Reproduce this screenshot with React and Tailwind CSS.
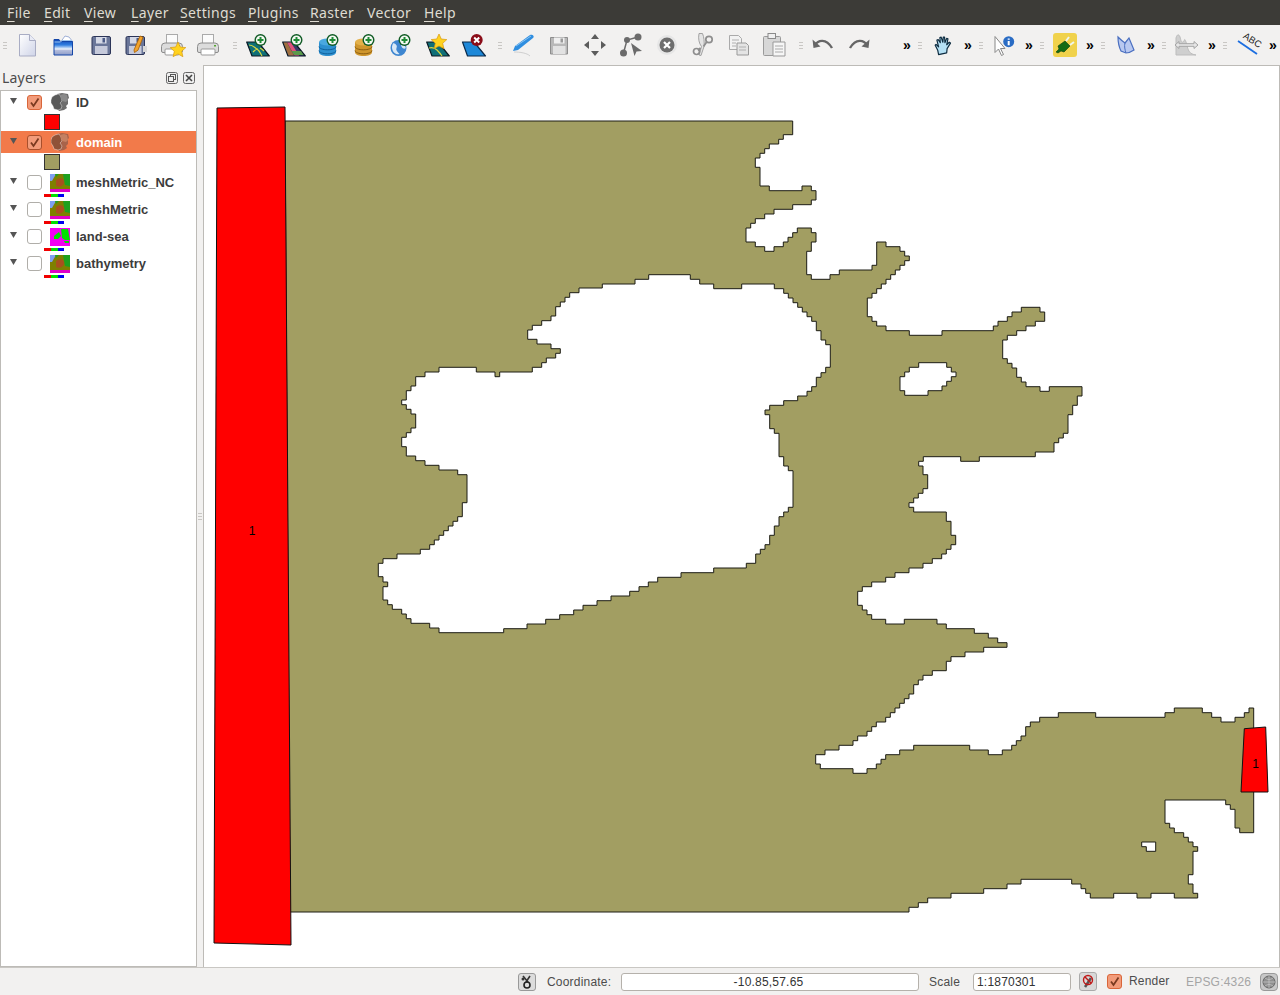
import React from "react";

const stair = (ox, oy, a) => {
  let s = "";
  for (let i = 0; i < a.length; i += 2) s += `H${(ox + a[i] / 3).toFixed(1)}V${(oy + a[i + 1] / 3).toFixed(1)}`;
  return s;
};
const partA = [158,74,130,88,116,102,88,116,74,130,60,144,46,172,60,228,88,242,186,228,214,242,228,270,214,284,158,298,102,312,74,326,46,340,32,354,18,396,46,410,74,424,102,410,130,396,144,382,158,368,172,354,214,368,228,396,214,424,200,494,214,508,270,494,298,480,396,466,410,396,438,410,480,424,494,438,508,452,494,466,480,480,466,494,452,508,438,522,424,536,410,550,396,564,382,620,396,634,410,648,438,662,508,676,606,662,760,648,774,634,802,620,816,606,844,592,900,606,914,634,886,648,858,662,830,676,802,690,788,746,802,760,816,774,830,802,844,816,858,830,900,844,928,830,1026,858,1012,886,998,914,984,970,970,984,956,998,942,1026,886,1040,718,1054,662,1040,550,1054,536,1068];
const partB = [369,74,383,116,369,130,355,144,341,158,327,172,341,186,439,214,453,256,467,284,453,298,439,312,425,326,397,340,369,354,327,368,285,382,257,396,215,410,187,424,173,466,187,480,201,494,215,508,257,522,313,508,411,522,439,536,523,550,565,564,593,578,621,592,551,606,495,620,453,634,439,662,397,676,369,690,355,704,341,732,327,746,313,760,299,774,285,788,271,802,257,816,229,830,215,844,201,858,173,872,159,886,117,900,75,914,47,942,61,956,159,970,201,956,229,942,243,928,257,914,299,900,341,886,509,900,565,914,607,900,635,886,649,872,663,858,677,830,691,816,719,802,775,788,887,802,1095,788,1123,774,1207,788,1235,802,1263,816,1305,802,1333,788,1347,774,1361,1148,1319,1134,1305,1078,1291,1064,1277,1050,1095,1120,1109,1134,1123,1148,1151,1162,1165,1176,1179,1190,1193,1204,1179,1274,1165,1302,1179,1330,1193,1344,1123,1330,1053,1344,1011,1330,941,1344,871,1330,857,1316,843,1302,815,1288,663,1302,621,1316,551,1330,453,1344,383,1358,355,1372,327,1386];
const hole = [961,28,989,42,1031,56,1115,42,1213,56,1241,70,1255,84,1269,98,1283,112,1297,126,1311,140,1325,154,1339,182,1353,210,1367,224,1381,292,1367,308,1353,322,1339,350,1325,364,1311,378,1283,392,1241,406,1199,420,1185,434,1199,476,1213,490,1227,560,1241,588,1255,602,1269,712,1255,726,1241,740,1227,768,1213,796,1199,824,1185,838,1171,852,1157,880,1129,894,1031,908,933,922,863,936,835,950,807,964,779,978,723,992,681,1006,639,1020,611,1034,569,1048,527,1062,471,1076,401,1088,207,1074,179,1060,123,1046,109,1032,95,1018,67,1004,53,990,39,950,53,936,39,920,25,880,39,866,81,852,151,838,179,824,193,810,207,796,221,782,235,768,249,754,263,740,277,698,291,614,263,600,207,586,165,572,137,558,109,530,95,502,109,488,123,474,137,432,123,418,109,404,95,390,109,362,123,348,137,320,165,306,207,292,319,306,375,320,389,306,487,292,515,278,529,264,557,250,571,236,543,222,501,208,473,180,487,166,515,152,543,138,557,110,571,96,585,82,599,68,627,54,697,42,795,28,836,14];
const island = [620,772,634,786,648,800,634,814,620,828,606,842,564,856,494,842,480,800,494,786,508,772,536,758];
const small = [1067,1204,1039,1190,1025,1176];
const domainPath =
  "M285 121" + stair(740, 110, partA) + stair(800, 450, partB) + "H290Z" +
  `M${(370 + 836 / 3).toFixed(1)} ${(270 + 14 / 3).toFixed(1)}` + stair(370, 270, hole) + "Z" +
  `M${(740 + 536 / 3).toFixed(1)} ${(110 + 758 / 3).toFixed(1)}` + stair(740, 110, island) + "Z" +
  `M${(800 + 1025 / 3).toFixed(1)} ${(450 + 1176 / 3).toFixed(1)}` + stair(800, 450, small) + "Z";

const Svg = ({ children }) => (
  <svg width="24" height="24" viewBox="0 0 24 24" className="block shrink-0 overflow-visible">{children}</svg>
);
const Plus = () => (
  <g>
    <circle cx="14.500" cy="7" r="6" fill="#0f5a24" />
    <circle cx="14.500" cy="7" r="4.600" fill="#f4f8f2" />
    <path d="M14.500 4v6M11.500 7h6" stroke="#1e8a35" strokeWidth="2" />
  </g>
);
const PLANE = "M.7 9H12l11.300 14H6z";
const Db = ({ c1, c2, c3 }) => (
  <g>
    <path d="M1 9v10.500C1 21.400 4.800 23 9.500 23s8.500-1.600 8.500-3.500V9z" fill={c1} />
    <ellipse cx="9.500" cy="9" rx="8.500" ry="3.500" fill={c2} />
    <path d="M1 13.500c0 1.900 3.800 3.300 8.500 3.300S18 15.400 18 13.500M1 17.500c0 1.900 3.800 3.300 8.500 3.300S18 19.400 18 17.500" fill="none" stroke={c3} strokeWidth="1" />
  </g>
);
const Floppy = ({ a = "#6a7699" }) => (
  <g>
    <path d="M3 5a1.500 1.500 0 0 1 1.500-1.500H20A1.500 1.500 0 0 1 21.500 5V20A1.500 1.500 0 0 1 20 21.500H4.500A1.500 1.500 0 0 1 3 20z" fill={a} stroke="#2c3558" strokeWidth="1" />
    <rect x="7" y="4" width="10.500" height="6.500" fill="#d5d9e6" />
    <rect x="13.500" y="5" width="2.500" height="4.500" fill="#4a5a86" />
    <rect x="6" y="13" width="12.500" height="8" fill="#c6cadb" />
  </g>
);
const Printer = () => (
  <g transform="translate(1 0)">
    <rect x="6.500" y="1.500" width="11" height="9" fill="#fbfbfb" stroke="#aaa" />
    <path d="M1.500 13.500a3.500 3.500 0 0 1 3.500-3.500h14a3.500 3.500 0 0 1 3.500 3.500V18a1.500 1.500 0 0 1-1.500 1.500H3A1.500 1.500 0 0 1 1.500 18z" fill="#dcdcdc" stroke="#8c8c8c" />
    <rect x="5" y="16" width="14" height="6" rx="1" fill="#fff" stroke="#999" />
    <rect x="18" y="12" width="2" height="1.500" fill="#55a630" />
  </g>
);
const Star = ({ x = 0, y = 0 }) => (
  <path transform={`translate(${x} ${y})`} d="M8 0l2.300 5 5.500.6-4.100 3.700 1.200 5.400L8 12l-4.900 2.700 1.200-5.400L.2 5.600 5.700 5z" fill="#ffd21f" stroke="#d99a10" strokeWidth=".7" />
);

const icons = {
  new: <Svg><defs><linearGradient id="pg" x1="0" y1="0" x2="1" y2="1"><stop offset="0" stopColor="#fff" /><stop offset="1" stopColor="#cfd4e8" /></linearGradient></defs><path d="M4.500 1.500h10l6 6v15.500h-16z" fill="url(#pg)" stroke="#a9adc4" /><path d="M14.500 1.500v6h6" fill="#e9ebf5" stroke="#a9adc4" /></Svg>,
  open: <Svg><defs><linearGradient id="fo" x1="0" y1="0" x2="0" y2="1"><stop offset="0" stopColor="#0f46b4" /><stop offset=".35" stopColor="#2f7ee0" /><stop offset=".62" stopColor="#f2f7fd" /><stop offset=".68" stopColor="#b6bfdd" /><stop offset="1" stopColor="#8e9cc8" /></linearGradient></defs><path d="M5 9l5-.5 4-5.500 4 1 4 5" fill="#fff" stroke="#9fb0d6" strokeWidth="1" /><path d="M3 6.500h5l1.500 2H21.500V22H3z" fill="url(#fo)" stroke="#1446a8" strokeWidth="1" /><path d="M3.500 9h6l1.500-1.500h10" stroke="#9cc6f1" fill="none" /></Svg>,
  save: <Svg><g transform="translate(2 0)"><Floppy /></g></Svg>,
  saveas: <Svg><Floppy /><rect x="20" y="13" width="4" height="6" fill="#d8d8d8" /><path d="M11 17L17 3l3 1.200-5 13-3.500 2.300z" fill="#f2a32c" stroke="#a85f00" strokeWidth=".8" /></Svg>,
  composer: <Svg><Printer /><Star x={11} y={9} /></Svg>,
  print: <Svg><Printer /></Svg>,
  addvec: <Svg><path d={PLANE} fill="#0f6f77" stroke="#0a1a24" strokeWidth="1.200" strokeLinejoin="round" /><path d="M3 12c4 0 5 2 8 4s3 4 5 7M7 19c2-2 3-3 5-3M14 15c2 1 3 2 4 3" fill="none" stroke="#d9d640" strokeWidth="1.200" /><Plus /></Svg>,
  addras: <Svg><path d={PLANE} fill="#3a3a6a" stroke="#0a1a24" strokeWidth="1.200" strokeLinejoin="round" /><path d="M5 9.500h4l8 13h-4.500z" fill="#e0507a" /><path d="M1.500 9.500H5l7 13H6.500z" fill="#a07040" /><path d="M9.500 18h9.500l2.500 4h-9z" fill="#5a9a4a" /><Plus /></Svg>,
  pg: <Svg><Db c1="#2d8fcf" c2="#4aa8e0" c3="#0f5f9a" /><Plus /></Svg>,
  sl: <Svg><Db c1="#cf962d" c2="#e3b04a" c3="#8a5c10" /><Plus /></Svg>,
  wms: <Svg><circle cx="8.500" cy="15" r="8" fill="#3e86d0" /><path d="M3.500 10c3 1 4 3 3 5s1 4 3 6c-3 1-6-1-7-4s-.5-5 1-7zM11.500 11c2 0 3 1 4 3s-2 2-3 1-2-3-1-4z" fill="#d8e8f6" /><Plus /></Svg>,
  newvec: <Svg><path d={PLANE} fill="#0f6f77" stroke="#0a1a24" strokeWidth="1.200" strokeLinejoin="round" /><path d="M3 15c4-1 6 0 8 2s3 3 5 6" fill="none" stroke="#d9d640" strokeWidth="1.200" /><Star x={5} y={1} /></Svg>,
  remove: <Svg><path d="M.5 9H12l11.500 14H5.500z" fill="#1e88d8" stroke="#0a2a4a" strokeWidth="1.200" strokeLinejoin="round" /><circle cx="14.700" cy="7" r="6" fill="#8a0c18" /><path d="M12.200 4.500l5 5M17.200 4.500l-5 5" stroke="#fff" strokeWidth="2" /></Svg>,
  pencil: <Svg><path d="M4 13L19 2c2-1 5 1 3 3L7 17l-5 1z" fill="#2f8ee0" /><path d="M5 13L20 3" stroke="#8cc5f2" /><path d="M3 19c6 0 13 1 16 4" stroke="#cfcfcf" fill="none" /></Svg>,
  savegray: <Svg><path d="M3.500 4.500h17v16.500h-17z" fill="#b8b8b8" stroke="#8d8d8d" /><rect x="7" y="4.500" width="10.500" height="6" fill="#efefef" /><rect x="13.500" y="5.500" width="2.500" height="4" fill="#999" /><rect x="6" y="13" width="12.500" height="8" fill="#e2e2e2" /></Svg>,
  move: <Svg><path d="M12 1l4 5H8zM12 23l-4-5h8zM1 12l5-4v8zM23 12l-5 4V8z" fill="#5c5c5c" /></Svg>,
  node: <Svg><circle cx="19" cy="4" r="3.500" fill="#6b6b6b" /><circle cx="8" cy="7" r="3" fill="#6b6b6b" /><circle cx="4.500" cy="20" r="3.500" fill="#6b6b6b" /><path d="M19 4L8 7 4.500 20" stroke="#6b6b6b" strokeWidth="1.500" fill="none" /><path d="M12 10l11 8-5.500.5-2 4.500z" fill="#6a6a6a" /></Svg>,
  del: <Svg><circle cx="12" cy="12" r="10" fill="#e6e6e6" /><circle cx="12" cy="12" r="7.500" fill="#6e6e6e" /><path d="M9 9l6 6M15 9l-6 6" stroke="#fff" strokeWidth="2.200" /></Svg>,
  cut: <Svg><path d="M8 .5c-1 5 0 10 2.500 13L8 22l2 .5 3-9C13.500 9 13 4 11.500.5z" fill="#e4e4e4" stroke="#9a9a9a" strokeWidth=".9" /><path d="M12.500 13.500l3.500-5M9.500 15l-2.500 2.500" stroke="#8e8e8e" strokeWidth="1.800" /><circle cx="18" cy="6.500" r="3.200" fill="none" stroke="#8e8e8e" strokeWidth="1.700" /><circle cx="5.500" cy="18.500" r="3" fill="none" stroke="#8e8e8e" strokeWidth="1.700" /></Svg>,
  copy: <Svg><path d="M2.500 2.500h9l3 3v11h-12z" fill="#f2f2f2" stroke="#aaa" /><path d="M10 10h9l2.500 2.500V22H10z" fill="#e4e4e4" stroke="#999" /><path d="M5 7h7M5 10h4M5 13h4M12 14h7M12 17h7" stroke="#b0b0b0" /></Svg>,
  paste: <Svg><rect x=".5" y="3.500" width="17" height="19" rx="1" fill="#d7d7d7" stroke="#9a9a9a" /><rect x="5" y=".5" width="7.500" height="5" fill="#efefef" stroke="#8a8a8a" /><path d="M10 9h12v14H10z" fill="#f6f6f6" stroke="#999" /><path d="M12 13h8M12 16h8M12 19h8" stroke="#aaa" /></Svg>,
  undo: <Svg><path d="M4 12c3-5 11-7 17 3" fill="none" stroke="#666" strokeWidth="2.400" /><path d="M1.500 6.500l1 8.500 7-1.500z" fill="#666" /></Svg>,
  redo: <Svg><path d="M20 12c-3-5-11-7-17 3" fill="none" stroke="#666" strokeWidth="2.400" /><path d="M22.500 6.500l-1 8.500-7-1.500z" fill="#666" /></Svg>,
  hand: <Svg><g transform="translate(2.500 2) scale(.85)"><path d="M6 23l-1-5-3-6 1-1 3 3-2-8 1.500-.5L8 9 7.500 3 9 2.500 11 8.500 11.500 2.500 13 2.500l.5 6.500 2-5 1.500.5-1.500 7 3-3 1.500 1-4 6.500-.5 5z" fill="#b5e1f5" stroke="#0d2c40" strokeWidth="1.400" strokeLinejoin="round" /></g></Svg>,
  identify: <Svg><path d="M3 3.500v16l3.500-3.500 3 6.500 2-1-3-6h4.500z" fill="#fff" stroke="#888" /><circle cx="16.700" cy="8.700" r="5.500" fill="#2a6cc4" /><path d="M16.700 5.500v1.200M16.700 8v4.200" stroke="#fff" strokeWidth="2" /></Svg>,
  plug: <Svg><rect width="24" height="24" rx="3" fill="#f0d24c" /><g transform="translate(0 -2)"><path d="M3 21l3-3-1-3 7-5 5 5-6 6-3-1-3 2z" fill="#146c14" stroke="#0c3f0c" strokeWidth=".6" /><path d="M13 10l3-4M17 14l4-3" stroke="#eef6ee" strokeWidth="2" /></g></Svg>,
  grass: <Svg><g transform="translate(-1 0)"><path d="M5 4c2 2 4 4 7 6 2-2 3-4 4-5l5 12c-3 2-6 3-8 3l-5-2c-2-4-3-9-3-14z" fill="#b8c8f0" stroke="#4a6fc0" strokeWidth="1.200" /><path d="M12 10c-1 3 0 7 1 10" stroke="#4a6fc0" fill="none" /></g></Svg>,
  hist: <Svg><path d="M1 22V5c1-4 3-4 4-1s1 6 3 5 1-5 3 0 1 12 10 13z" fill="#cfcfcf" stroke="#bdbdbd" /><path d="M0 12l4-3.500v2.200h15V8.500l4 3.500-4 3.500v-2.200H4v2.200z" fill="#e6e6e6" stroke="#a4a4a4" /></Svg>,
  abc: <Svg><path d="M2 8l19 13" stroke="#1c6ee0" strokeWidth="1.800" /><text transform="translate(6.500 4.500) rotate(33)" fontFamily="'Liberation Sans',sans-serif" fontSize="9.500" fill="#222">ABC</text></Svg>,
};

const Grip = ({ className = "" }) => (
  <div className={`w-[4px] flex flex-col gap-[2px] shrink-0 ${className}`}>
    <div className="h-px bg-[#c9c7c4]" />
    <div className="h-px bg-[#c9c7c4]" />
    <div className="h-px bg-[#c9c7c4]" />
  </div>
);
const Btn = ({ n, className = "" }) => (
  <div className={`w-[36px] h-[36px] flex items-center justify-center shrink-0 ${className}`}>{icons[n]}</div>
);
const More = ({ className = "" }) => (
  <div className={`w-[14px] text-center text-[14px] font-bold leading-none text-black shrink-0 font-['Liberation_Sans',sans-serif] ${className}`}>»</div>
);
const Unit = ({ n }) => (
  <>
    <Grip className="ml-[4px]" />
    <Btn n={n} className="ml-[3px]" />
    <More />
  </>
);

const menus = [
  ["F", "ile", "w-[37px]"],
  ["E", "dit", "w-[40px]"],
  ["V", "iew", "w-[47px]"],
  ["L", "ayer", "w-[49px]"],
  ["S", "ettings", "w-[68px]"],
  ["P", "lugins", "w-[62px]"],
  ["R", "aster", "w-[57px]"],
  ["Vect", "or", "w-[57px]", true],
  ["H", "elp", "w-[50px]"],
];

const Check = ({ on, selected }) => (
  <div className={`w-[15px] h-[15px] rounded-[3px] border flex items-center justify-center shrink-0 ${on ? "bg-[#f29b7a]" : "border-[#b0aea9] bg-white"} ${on && selected ? "border-[#a84f2c]" : ""} ${on && !selected ? "border-[#d9663a]" : ""}`}>
    {on && (
      <svg width="13" height="13" viewBox="0 0 13 13"><path d="M3 6.500l2.500 3.500L10.500 2.500" fill="none" stroke="#7a3a20" strokeWidth="1.800" /></svg>
    )}
  </div>
);
const Tri = () => (
  <svg width="7" height="6" viewBox="0 0 7 6" className="shrink-0 block mb-[2px]"><path d="M0 0h7L3.500 6z" fill="#555" /></svg>
);
const Rock = ({ a, b, c }) => (
  <svg width="18" height="18" viewBox="0 0 18 18" className="shrink-0">
    <path d="M6 1l5-1 6 1 1 4-1 1v5l-2 2 1 2-3 2-5 1-3-4z" fill={c} />
    <path d="M0 7l1-3 3-2 4-1 2 3 1 4-2 2 2 3-1 3-3 1-4-1-1-3-2-3z" fill={a} stroke="#fff" strokeWidth=".4" />
    <path d="M9 2l4-1 3 1 1 5-2 2-4-1-1-3z" fill={b} />
  </svg>
);
const Raster = ({ land }) => (
  <svg width="20" height="18" viewBox="0 0 20 18" className="shrink-0 mt-[2px]">
    {land ? (
      <g>
        <rect width="20" height="18" fill="#f200f2" />
        <path d="M11 1h7l1 6 1 5h-5l-3-2zM4 8l5-4 2 4-3 3-4 0zM14 13h5v2h-4z" fill="#00e000" />
      </g>
    ) : (
      <g>
        <rect width="20" height="18" fill="#7f7f00" />
        <rect width="20" height="3" y="15" fill="#e000c8" />
        <path d="M0 0h6L2 7H0z" fill="#7f9ff0" />
        <path d="M13 0h7v12l-5-1zM5 0h4L6 3z" fill="#1ea01e" />
        <path d="M6 6c4-3 8-2 8 2s-5 6-8 4z" fill="#a8501e" />
      </g>
    )}
  </svg>
);
const Ramp = () => (
  <div className="flex w-[20px] h-[3px] ml-[43px] mt-px">
    <div className="w-[7px] bg-[#f00000]" />
    <div className="w-[7px] bg-[#00e000]" />
    <div className="w-[6px] bg-[#0000f0]" />
  </div>
);
const RasterRow = ({ name, land }) => (
  <div className="h-[27px] flex flex-col">
    <div className="flex items-center h-[22px]">
      <div className="w-[26px] pl-[9px]"><Tri /></div>
      <Check />
      <div className="ml-[8px]"><Raster land={land} /></div>
      <span className="ml-[6px] mt-[2px] text-[13px] font-bold text-[#3c3c3c] font-['Liberation_Sans',sans-serif]">{name}</span>
    </div>
    <Ramp />
  </div>
);
const Swatch = ({ c, h }) => (
  <div className={`${h} flex items-center pl-[43px]`}>
    <div className="w-[16px] h-[16px] border border-[#333]" style={{ background: c }} />
  </div>
);

export default function App() {
  return (
    <div className="w-[1280px] h-[995px] flex flex-col bg-[#f2f1f0] overflow-hidden font-['Noto_Sans',sans-serif]">
      <div className="h-[25px] bg-[#3c3b37] flex items-center pl-[7px] text-[14px] tracking-[0.35px] text-[#dfdbd2] shrink-0">
        {menus.map(([a, b, w, after]) => (
          <div key={a + b} className={`${w} shrink-0 leading-none`}>
            {after ? (<>{a}<span className="underline underline-offset-[3px]">o</span>r</>) : (<><span className="underline underline-offset-[3px]">{a}</span>{b}</>)}
          </div>
        ))}
      </div>

      <div className="h-[40px] flex items-center shrink-0">
        <Grip className="ml-[3px]" />
        <Btn n="new" className="ml-[2px]" />
        <Btn n="open" /><Btn n="save" /><Btn n="saveas" /><Btn n="composer" /><Btn n="print" />
        <Grip className="ml-[8px]" />
        <Btn n="addvec" className="ml-[3px]" />
        <Btn n="addras" /><Btn n="pg" /><Btn n="sl" /><Btn n="wms" /><Btn n="newvec" /><Btn n="remove" />
        <Grip className="ml-[6px]" />
        <Btn n="pencil" className="ml-[3px]" />
        <Btn n="savegray" /><Btn n="move" /><Btn n="node" /><Btn n="del" /><Btn n="cut" /><Btn n="copy" /><Btn n="paste" />
        <Grip className="ml-[6px]" />
        <Btn n="undo" className="ml-[2px]" />
        <Btn n="redo" />
        <More className="ml-[23px]" />
        <Unit n="hand" /><Unit n="identify" /><Unit n="plug" /><Unit n="grass" /><Unit n="hist" /><Unit n="abc" />
      </div>

      <div className="flex-1 flex min-h-0">
        <div className="w-[197px] flex flex-col shrink-0">
          <div className="h-[25px] flex items-center justify-between pl-[2px] pr-[2px] shrink-0">
            <span className="text-[14px] tracking-[0.2px] text-[#4c4c4c] leading-none">Layers</span>
            <div className="flex gap-[5px]">
              <svg width="12" height="12" viewBox="0 0 12 12"><rect x=".5" y=".5" width="11" height="11" rx="2" fill="#eee" stroke="#666" /><rect x="4.500" y="2.500" width="5" height="5" fill="none" stroke="#555" /><rect x="2.500" y="4.500" width="5" height="5" fill="#eee" stroke="#555" /></svg>
              <svg width="12" height="12" viewBox="0 0 12 12"><rect x=".5" y=".5" width="11" height="11" rx="2" fill="#eee" stroke="#666" /><path d="M3 3l6 6M9 3l-6 6" stroke="#444" strokeWidth="1.600" /></svg>
            </div>
          </div>
          <div className="flex-1 bg-white border border-[#bdbbb7] pt-px">
            <div className="h-[20px] flex items-center">
              <div className="w-[26px] pl-[9px]"><Tri /></div>
              <Check on />
              <div className="ml-[9px]"><Rock a="#5a5a5a" b="#8a8a8a" c="#6c6c6c" /></div>
              <span className="ml-[7px] mt-[2px] text-[13px] font-bold text-[#3c3c3c] font-['Liberation_Sans',sans-serif]">ID</span>
            </div>
            <Swatch c="#ff0000" h="h-[19px]" />
            <div className="h-[22px] flex items-center bg-[#f27a4a]">
              <div className="w-[26px] pl-[9px]"><Tri /></div>
              <Check on selected />
              <div className="ml-[9px]"><Rock a="#8f5238" b="#c48062" c="#a8634a" /></div>
              <span className="ml-[7px] mt-[2px] text-[13px] font-bold text-white font-['Liberation_Sans',sans-serif]">domain</span>
            </div>
            <Swatch c="#a29e62" h="h-[18px]" />
            <RasterRow name="meshMetric_NC" />
            <RasterRow name="meshMetric" />
            <RasterRow name="land-sea" land />
            <RasterRow name="bathymetry" />
          </div>
        </div>
        <div className="w-[6px] shrink-0 flex items-center justify-center">
          <div className="w-[4px] flex flex-col gap-[2px]">
            <div className="h-px bg-[#c9c7c4]" /><div className="h-px bg-[#c9c7c4]" /><div className="h-px bg-[#c9c7c4]" />
          </div>
        </div>
        <div className="flex-1 bg-white border-l border-t border-r border-[#bdbbb7] min-w-0 overflow-hidden">
          <svg width="1076" height="901" viewBox="204 66 1076 901" className="block">
            <path d={domainPath} fill="#a29e62" fillRule="evenodd" stroke="#1c1c14" strokeWidth="1" />
            <path d="M217 108L285 107 291 945 214 943Z" fill="#ff0000" stroke="#111" strokeWidth="1" />
            <path d="M1244.300 728.700L1265.700 727 1268 792 1241 792Z" fill="#ff0000" stroke="#111" strokeWidth="1" />
            <text x="252" y="535" textAnchor="middle" fontSize="12" fontFamily="'Liberation Sans',sans-serif" fill="#000">1</text>
            <text x="1255.500" y="768" textAnchor="middle" fontSize="12" fontFamily="'Liberation Sans',sans-serif" fill="#000">1</text>
          </svg>
        </div>
      </div>

      <div className="h-[28px] shrink-0 flex items-center text-[12px] tracking-[0.2px] text-[#4c4c4c] font-['Liberation_Sans',sans-serif] border-t border-[#c9c7c3]">
        <div className="w-[18px] h-[18px] ml-[518px] rounded-[3px] border border-[#999] bg-[#dcdcdc] flex items-center justify-center shrink-0">
          <svg width="14" height="14" viewBox="0 0 14 14"><path d="M3 1l5 6M10 1L6 7" stroke="#333" strokeWidth="1.600" /><circle cx="7" cy="10" r="3" fill="none" stroke="#222" strokeWidth="1.600" /><circle cx="3" cy="4" r="1.500" fill="#333" /></svg>
        </div>
        <span className="ml-[11px] w-[74px] shrink-0">Coordinate:</span>
        <div className="w-[298px] h-[18px] shrink-0 bg-white border border-[#b5b1ab] rounded-[3px] flex items-center justify-center pr-[3px] text-[#333]">-10.85,57.65</div>
        <span className="ml-[10px] w-[44px] shrink-0">Scale</span>
        <div className="w-[98px] h-[18px] shrink-0 bg-white border border-[#b5b1ab] rounded-[3px] flex items-center pl-[3px] text-[#333]">1:1870301</div>
        <div className="w-[18px] h-[19px] ml-[8px] rounded-[3px] border border-[#aaa] bg-[#d8d8d8] flex items-center justify-center shrink-0">
          <svg width="14" height="16" viewBox="0 0 14 16"><path d="M4 13l6-9" stroke="#555" strokeWidth="2.500" /><circle cx="7" cy="6" r="4.500" fill="none" stroke="#c01818" strokeWidth="1.400" /><path d="M4 3l6 6" stroke="#c01818" strokeWidth="1.400" /></svg>
        </div>
        <div className="ml-[10px]"><Check on /></div>
        <span className="ml-[7px] w-[57px] shrink-0 mt-[-1px]">Render</span>
        <span className="w-[74px] shrink-0 text-[#a5a5a5]">EPSG:4326</span>
        <div className="w-[18px] h-[18px] rounded-[4px] bg-[#c8c8c8] border border-[#999] flex items-center justify-center shrink-0">
          <svg width="14" height="14" viewBox="0 0 14 14"><circle cx="7" cy="7" r="6" fill="#8f8f8f" stroke="#666" /><path d="M1 7h12M7 1v12M3 3c3 2 5 2 8 0M3 11c3-2 5-2 8 0" stroke="#ccc" strokeWidth=".7" fill="none" /></svg>
        </div>
      </div>
    </div>
  );
}
